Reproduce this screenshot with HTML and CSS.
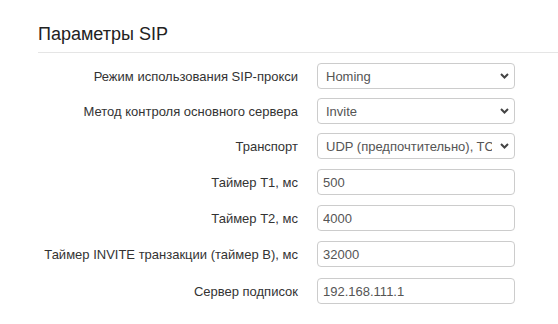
FILE: index.html
```html
<!DOCTYPE html>
<html lang="ru">
<head>
    <meta charset="UTF-8">
    <meta name="viewport" content="width=device-width, initial-scale=1.0">
    <title>Параметры SIP</title>
    <link rel="stylesheet" href="styles.css">
</head>
<body>
    <section class="panel">
        <h2 class="panel-title">Параметры SIP</h2>
        <form class="settings">
            <div class="row row-tight">
                <label for="proxy-mode">Режим использования SIP-прокси</label>
                <div class="select-wrap">
                    <select id="proxy-mode"><option>Homing</option></select>
                    <svg class="chevron" width="9" height="6" viewBox="0 0 9 6"><path d="M1 1l3.5 3.5L8 1" fill="none" stroke="#444" stroke-width="2"/></svg>
                </div>
            </div>
            <div class="row row-tight">
                <label for="check-method">Метод контроля основного сервера</label>
                <div class="select-wrap">
                    <select id="check-method"><option>Invite</option></select>
                    <svg class="chevron" width="9" height="6" viewBox="0 0 9 6"><path d="M1 1l3.5 3.5L8 1" fill="none" stroke="#444" stroke-width="2"/></svg>
                </div>
            </div>
            <div class="row">
                <label for="transport">Транспорт</label>
                <div class="select-wrap">
                    <select id="transport"><option>UDP (предпочтительно), TCP</option></select>
                    <svg class="chevron" width="9" height="6" viewBox="0 0 9 6"><path d="M1 1l3.5 3.5L8 1" fill="none" stroke="#444" stroke-width="2"/></svg>
                </div>
            </div>
            <div class="row">
                <label for="t1">Таймер T1, мс</label>
                <input type="text" id="t1" value="500">
            </div>
            <div class="row">
                <label for="t2">Таймер T2, мс</label>
                <input type="text" id="t2" value="4000">
            </div>
            <div class="row">
                <label for="tb">Таймер INVITE транзакции (таймер B), мс</label>
                <input type="text" id="tb" value="32000">
            </div>
            <div class="row row-last">
                <label for="subs">Сервер подписок</label>
                <input type="text" id="subs" value="192.168.111.1">
            </div>
        </form>
    </section>
</body>
</html>
```

FILE: styles.css
```css
body {
    margin: 0;
    background: #fff;
    color: #333;
    font-family: "Liberation Sans", Arial, sans-serif;
    font-size: 13px;
}
.panel {
    padding: 24px 0 0 38px;
}
.panel-title {
    margin: 0;
    padding-bottom: 8px;
    border-bottom: 1px solid #e5e5e5;
    font-size: 18px;
    font-weight: normal;
    line-height: 20px;
    color: #222;
}
.settings {
    padding-top: 10px;
}
.row {
    display: grid;
    grid-template-columns: 260px 198px;
    column-gap: 19px;
    align-items: center;
    margin-bottom: 10px;
}
.row-tight {
    margin-bottom: 9px;
}
.row-last {
    margin-top: 11px;
}
.row label {
    text-align: right;
    white-space: nowrap;
}
.select-wrap {
    position: relative;
}
select,
input {
    box-sizing: border-box;
    width: 198px;
    height: 26px;
    border: 1px solid #ccc;
    border-radius: 4px;
    background: #fff;
    color: #555;
    font-family: inherit;
    font-size: 13px;
}
select {
    appearance: none;
    -webkit-appearance: none;
    padding: 0 22px 0 8px;
}
input {
    padding: 0 5px;
}
.chevron {
    position: absolute;
    right: 6px;
    top: 10px;
    pointer-events: none;
}
```
